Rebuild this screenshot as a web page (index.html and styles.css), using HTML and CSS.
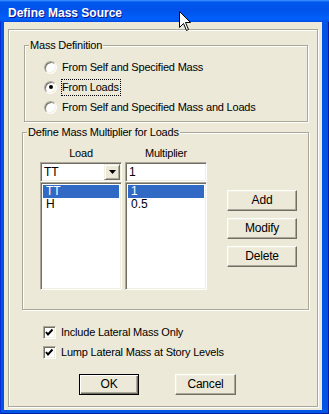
FILE: index.html
```html
<!DOCTYPE html>
<html lang="en">
<head>
    <meta charset="UTF-8">
    <meta name="viewport" content="width=device-width, initial-scale=1.0">
    <title>Define Mass Source</title>
    <link rel="stylesheet" href="styles.css">
</head>

<body>
    <div class="window">
        <div class="titlebar">Define Mass Source</div>

        <div class="client">
            <div class="frame">

                <!-- Mass Definition -->
                <div class="group group_mass">
                    <div class="group_title">Mass Definition</div>
                    <div class="options">
                        <div class="option"><span class="radio"></span><span>From Self and Specified Mass</span></div>
                        <div class="option"><span class="radio checked"></span><span class="focus">From Loads</span></div>
                        <div class="option"><span class="radio"></span><span>From Self and Specified Mass and Loads</span></div>
                    </div>
                </div>

                <!-- Define Mass Multiplier for Loads -->
                <div class="group group_mult">
                    <div class="group_title">Define Mass Multiplier for Loads</div>
                    <div class="mult_body">
                        <div class="col">
                            <div class="col_head">Load</div>
                            <div class="combo">
                                <span class="combo_text">TT</span>
                                <span class="combo_btn">
                                    <svg width="7" height="4" viewBox="0 0 7 4"><polygon points="0,0 7,0 3.5,4" fill="#000"/></svg>
                                </span>
                            </div>
                            <ul class="listbox">
                                <li class="sel">TT</li>
                                <li>H</li>
                            </ul>
                        </div>
                        <div class="col">
                            <div class="col_head">Multiplier</div>
                            <div class="textbox">1</div>
                            <ul class="listbox">
                                <li class="sel">1</li>
                                <li>0.5</li>
                            </ul>
                        </div>
                        <div class="actions">
                            <div class="btn">Add</div>
                            <div class="btn">Modify</div>
                            <div class="btn">Delete</div>
                        </div>
                    </div>
                </div>

                <!-- checkboxes -->
                <div class="checks">
                    <div class="option">
                        <span class="checkbox"><svg width="11" height="11" viewBox="0 0 11 11"><polyline points="2,5 4,7.5 8.5,2.5" fill="none" stroke="#000" stroke-width="2"/></svg></span>
                        <span>Include Lateral Mass Only</span>
                    </div>
                    <div class="option">
                        <span class="checkbox"><svg width="11" height="11" viewBox="0 0 11 11"><polyline points="2,5 4,7.5 8.5,2.5" fill="none" stroke="#000" stroke-width="2"/></svg></span>
                        <span>Lump Lateral Mass at Story Levels</span>
                    </div>
                </div>

                <div class="footer">
                    <div class="btn default">OK</div>
                    <div class="btn">Cancel</div>
                </div>

            </div>
        </div>

        <!-- mouse pointer -->
        <svg class="cursor" width="13" height="21" viewBox="0 0 13 21">
            <path d="M0.5 0.5 L0.5 16.5 L4.5 12.5 L7.5 19.5 L9.5 18.5 L6.5 11.5 L11.5 11.5 Z" fill="#fff" stroke="#000" stroke-width="1"/>
        </svg>
    </div>
</body>
</html>
```

FILE: styles.css
```css
* {
    box-sizing: border-box;
}

body {
    margin: 0;
    font-family: "Liberation Sans", Arial, sans-serif;
    font-size: 11px;
    line-height: 13px;
    letter-spacing: -0.2px;
    color: #000;
}

/* window frame */
.window {
    position: relative;
    width: 329px;
    height: 414px;
    background: #0055e5;
    box-shadow: inset 1px 0 0 #0831d9, inset -1px -1px 0 #001ea0;
}
.titlebar {
    height: 22px;
    padding: 5px 0 0 8px;
    line-height: 17px;
    font-size: 12px;
    font-weight: bold;
    letter-spacing: 0;
    color: #fff;
    text-shadow: 1px 1px 0 #0f1089;
    background: linear-gradient(to bottom, #3d95ff 0%, #0058ee 10%, #0052ea 45%, #0060fc 85%, #005bf5 92%, #0049de 100%);
}
.client {
    width: 318px;
    height: 388px;
    margin-left: 4px;
    padding: 7px 0 0 4px;
    background: #ece9d8;
}

/* etched boxes */
.frame, .group {
    border: 1px solid #aca899;
    box-shadow: 1px 1px 0 #fff, inset 1px 1px 0 #fff;
}
.frame {
    width: 310px;
    height: 378px;
}
.group_title {
    display: table;
    margin: -7px 0 0 4px;
    padding: 0 1px;
    background: #ece9d8;
}

.group_mass {
    width: 284px;
    margin: 15px 0 0 15px;
}
.options {
    padding: 5px 0 4px 19px;
}
.option {
    display: flex;
    align-items: center;
    height: 20px;
}
.radio {
    position: relative;
    width: 13px;
    height: 13px;
    margin-right: 5px;
    border-radius: 50%;
    background: #fff;
    border: 1px solid;
    border-color: #aca899 #fff #fff #aca899;
    box-shadow: inset 1px 1px 0 #716f64, inset -1px -1px 0 #f1efe2;
}
.radio.checked::after {
    content: "";
    position: absolute;
    left: 3.5px;
    top: 3.5px;
    width: 4px;
    height: 4px;
    border-radius: 50%;
    background: #000;
}
.focus {
    margin-left: -1px;
    padding: 1px 1px 1px 0;
    border: 1px dotted #000;
}

.group_mult {
    width: 287px;
    height: 178px;
    margin: 10px 0 0 13px;
}
.mult_body {
    display: flex;
    padding: 8px 0 0 17px;
}
.col {
    width: 82px;
    margin-right: 3px;
}
.col_head {
    height: 15px;
    text-align: center;
}

/* sunken controls */
.combo, .textbox, .listbox {
    background: #fff;
    border: 1px solid;
    border-color: #aca899 #fff #fff #aca899;
    box-shadow: inset 1px 1px 0 #716f64, inset -1px -1px 0 #f1efe2;
}
.combo {
    display: flex;
    align-items: center;
    justify-content: space-between;
    height: 20px;
    padding: 0 1px 0 3px;
    font-size: 12px;
    letter-spacing: 0;
}
.combo_btn {
    display: flex;
    align-items: center;
    justify-content: center;
    width: 16px;
    height: 16px;
    background: #ece9d8;
    border: 1px solid;
    border-color: #f1efe2 #716f64 #716f64 #f1efe2;
    box-shadow: inset 1px 1px 0 #fff, inset -1px -1px 0 #aca899;
}
.textbox {
    height: 20px;
    padding: 2px 0 0 3px;
    font-size: 12px;
    line-height: 15px;
}
.listbox {
    height: 108px;
    margin: 0;
    padding: 2px;
    list-style: none;
    font-size: 12px;
    letter-spacing: 0;
}
.listbox li {
    height: 13px;
    line-height: 13px;
    padding-left: 3px;
}
.listbox .sel {
    background: #316ac5;
    color: #fff;
}

/* buttons */
.actions {
    display: flex;
    flex-direction: column;
    gap: 7px;
    margin: 43px 0 0 17px;
}
.btn {
    width: 70px;
    height: 21px;
    line-height: 19px;
    text-align: center;
    font-size: 12px;
    background: #ece9d8;
    border: 1px solid;
    border-color: #fff #716f64 #716f64 #fff;
    box-shadow: inset -1px -1px 0 #aca899, inset 1px 1px 0 #f1efe2;
}

.checks {
    margin: 12px 0 0 34px;
}
.checkbox {
    display: flex;
    align-items: center;
    justify-content: center;
    width: 13px;
    height: 13px;
    margin-right: 5px;
    background: #fff;
    border: 1px solid;
    border-color: #aca899 #fff #fff #aca899;
    box-shadow: inset 1px 1px 0 #716f64, inset -1px -1px 0 #f1efe2;
}

.footer {
    display: flex;
    gap: 36px;
    margin: 12px 0 0 70px;
}
.footer .btn {
    width: 60px;
}
.btn.default {
    border: 1px solid #000;
    box-shadow: inset 1px 1px 0 #fff, inset -1px -1px 0 #716f64, inset -2px -2px 0 #aca899;
}
.footer .btn:last-child {
    width: 61px;
}

.cursor {
    position: absolute;
    left: 179px;
    top: 11px;
}
```
